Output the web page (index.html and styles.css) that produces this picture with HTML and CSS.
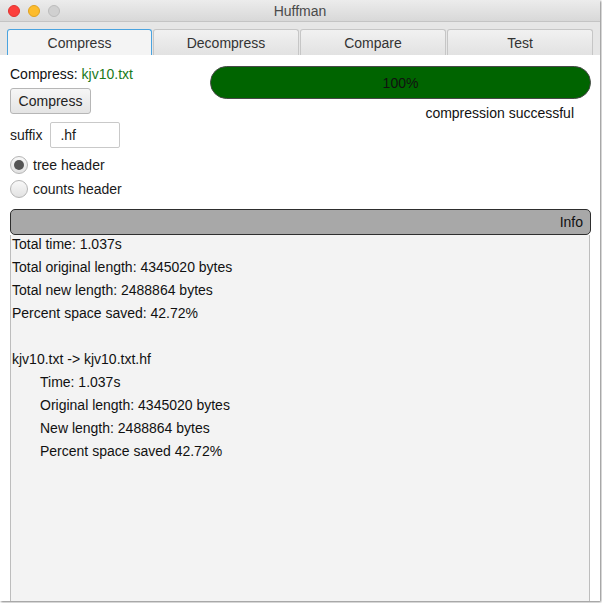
FILE: index.html
```html
<!DOCTYPE html>
<html>
<head>
<meta charset="utf-8">
<link rel="stylesheet" href="styles.css">
</head>
<body>
<div class="window">
  <div class="titlebar">
    <div class="lights">
      <span class="light red"></span>
      <span class="light yellow"></span>
      <span class="light gray"></span>
    </div>
    <div class="title">Huffman</div>
  </div>
  <div class="tabbar">
    <div class="tab selected">Compress</div>
    <div class="tab">Decompress</div>
    <div class="tab">Compare</div>
    <div class="tab">Test</div>
  </div>
  <div class="content">
    <div class="top">
      <div class="controls">
        <div class="label-row">Compress: <span class="file">kjv10.txt</span></div>
        <div class="btn">Compress</div>
        <div class="suffix-row">
          <span>suffix</span>
          <div class="input">.hf</div>
        </div>
        <div class="radio-row"><span class="radio checked"></span>tree header</div>
        <div class="radio-row"><span class="radio"></span>counts header</div>
      </div>
      <div class="status">
        <div class="progress">100%</div>
        <div class="status-text">compression successful</div>
      </div>
    </div>
    <div class="info">
      <div class="info-head">Info</div>
      <div class="info-body">
        <div class="line">Total time: 1.037s</div>
        <div class="line">Total original length: 4345020 bytes</div>
        <div class="line">Total new length: 2488864 bytes</div>
        <div class="line">Percent space saved: 42.72%</div>
        <div class="line"></div>
        <div class="line">kjv10.txt -&gt; kjv10.txt.hf</div>
        <div class="line indent">Time: 1.037s</div>
        <div class="line indent">Original length: 4345020 bytes</div>
        <div class="line indent">New length: 2488864 bytes</div>
        <div class="line indent">Percent space saved 42.72%</div>
      </div>
    </div>
  </div>
</div>
</body>
</html>
```
FILE: styles.css
```css
html, body {
  margin: 0;
  padding: 0;
  background: #ffffff;
}
body {
  width: 602px;
  height: 603px;
  overflow: hidden;
  font-family: "Liberation Sans", Arial, sans-serif;
  font-size: 14px;
  color: #1a1a1a;
}
.window {
  width: 600px;
  height: 601px;
  display: flex;
  flex-direction: column;
  background: #ffffff;
  box-shadow: 1px 1px 2px #808080;
  overflow: hidden;
}
.titlebar {
  height: 22px;
  flex: none;
  position: relative;
  background: linear-gradient(#ececec, #d8d8d8);
  border-bottom: 1px solid #c4c4c4;
  box-sizing: border-box;
  display: flex;
  align-items: center;
  justify-content: center;
}
.lights {
  position: absolute;
  left: 8px;
  top: 5px;
  display: flex;
  gap: 8px;
}
.light {
  width: 12px;
  height: 12px;
  border-radius: 50%;
  box-sizing: border-box;
}
.red { background: #fc3f3c; border: 1px solid #e0332f; }
.yellow { background: #fdbc2c; border: 1px solid #e0a21f; }
.gray { background: #d0d0d0; border: 1px solid #bcbcbc; }
.title {
  font-size: 14px;
  color: #4a4a4a;
}
.tabbar {
  height: 33px;
  flex: none;
  box-sizing: border-box;
  padding: 7px 0 0 7px;
  background: #e6e6e6;
  display: flex;
  gap: 1px;
}
.tab {
  width: 146px;
  height: 26px;
  box-sizing: border-box;
  border: 1px solid #c6c6c6;
  border-bottom: none;
  border-radius: 3px 3px 0 0;
  background: linear-gradient(#f1f1f1, #e2e2e2);
  display: flex;
  align-items: center;
  justify-content: center;
  color: #333333;
  font-size: 14px;
}
.tab.selected {
  width: 145px;
  background: #f4f4f4;
  border: 1px solid #4aa3df;
  border-bottom: none;
}
.content {
  flex: 1;
  display: flex;
  flex-direction: column;
  padding: 11px 9px 0 10px;
  min-height: 0;
}
.top {
  display: flex;
  height: 143px;
  flex: none;
}
.controls {
  width: 200px;
  display: flex;
  flex-direction: column;
}
.label-row {
  height: 16px;
  line-height: 16px;
  color: #111;
}
.file { color: #1a7a1a; }
.btn {
  margin-top: 6px;
  width: 81px;
  height: 26px;
  box-sizing: border-box;
  border: 1px solid #b6b6b6;
  border-radius: 3px;
  background: linear-gradient(#f6f6f6, #e4e4e4);
  display: flex;
  align-items: center;
  justify-content: center;
  color: #222;
}
.suffix-row {
  margin-top: 8px;
  display: flex;
  align-items: center;
  gap: 8px;
  height: 26px;
}
.input {
  width: 70px;
  height: 26px;
  box-sizing: border-box;
  border: 1px solid #c9c9c9;
  border-radius: 2px;
  padding-left: 9px;
  display: flex;
  align-items: center;
  background: #fff;
}
.radio-row {
  margin-top: 8px;
  height: 18px;
  display: flex;
  align-items: center;
  gap: 5px;
}
.radio-row + .radio-row {
  margin-top: 6px;
}
.radio {
  width: 18px;
  height: 18px;
  box-sizing: border-box;
  border-radius: 50%;
  border: 1px solid #b5b5b5;
  background: linear-gradient(#f8f8f8, #e2e2e2);
  display: flex;
  align-items: center;
  justify-content: center;
}
.radio.checked::after {
  content: "";
  width: 10px;
  height: 10px;
  border-radius: 50%;
  background: #555555;
}
.status {
  flex: 1;
  display: flex;
  flex-direction: column;
  align-items: stretch;
}
.progress {
  height: 33px;
  box-sizing: border-box;
  border: 1px solid #474747;
  border-radius: 17px;
  background: #006400;
  display: flex;
  align-items: center;
  justify-content: center;
  color: #111;
}
.status-text {
  margin-top: 6px;
  text-align: right;
  padding-right: 17px;
  line-height: 16px;
  color: #111;
}
.info {
  flex: 1;
  display: flex;
  flex-direction: column;
  min-height: 0;
}
.info-head {
  height: 26px;
  box-sizing: border-box;
  border: 1px solid #2e2e2e;
  border-radius: 5px;
  background: #a8a8a8;
  text-align: right;
  padding-right: 7px;
  line-height: 24px;
  color: #111;
}
.info-body {
  flex: 1;
  margin-right: 1px;
  background: #f3f3f3;
  border-left: 1px solid #bdbdbd;
  border-right: 1px solid #bdbdbd;
  padding-top: 1px;
}
.line {
  height: 23px;
  line-height: 16px;
  padding-left: 1px;
  color: #111;
}
.line.indent {
  padding-left: 29px;
}
```
